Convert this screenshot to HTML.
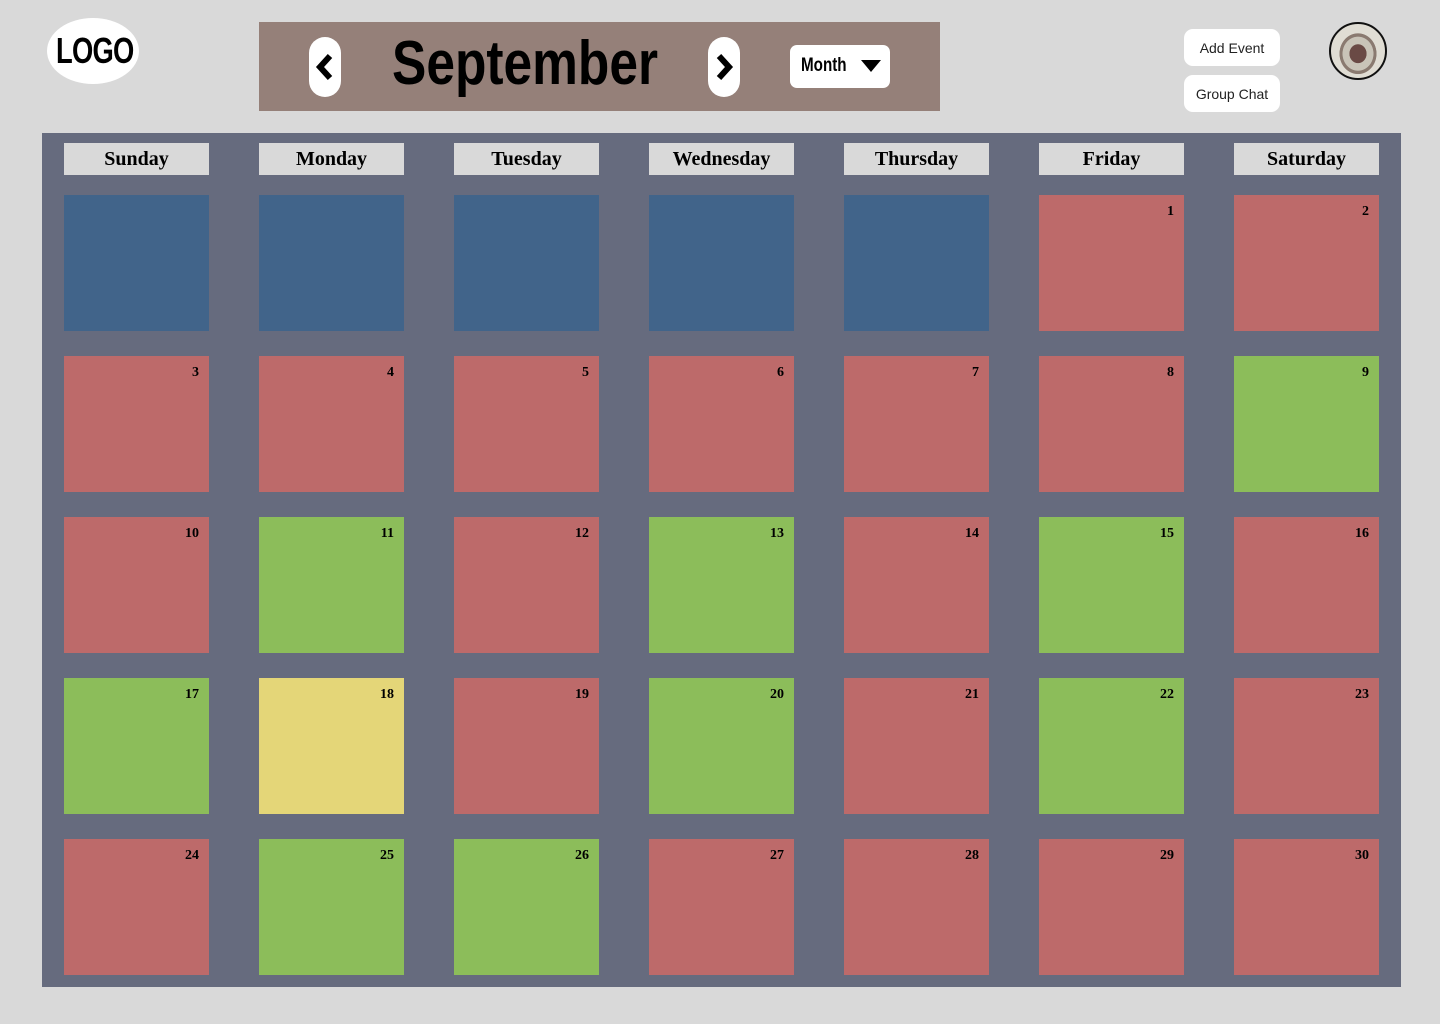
<!DOCTYPE html>
<html><head><style>
*{margin:0;padding:0;box-sizing:border-box}
body{width:1440px;height:1024px;background:#d9d9d9;position:relative;overflow:hidden;font-family:"Liberation Serif",serif}
.a{position:absolute}
.logo{left:47px;top:18px;width:92px;height:66px;background:#fff;border-radius:46px/33px}
.logot{left:56px;top:30px;font:bold 36px "Liberation Sans",sans-serif;transform:scaleX(.76);transform-origin:left top;letter-spacing:-1px}
.bar{left:259px;top:22px;width:681px;height:89px;background:#958079}
.arr{width:32px;height:60px;background:#fff;border-radius:16px;top:37px;display:flex;align-items:center;justify-content:center}
.title{left:392px;top:28px;font:bold 62px "Liberation Sans",sans-serif;transform:scaleX(.83);transform-origin:left top;white-space:nowrap}
.month{left:790px;top:45px;width:100px;height:43px;background:#fff;border-radius:7px}
.mt{left:801px;top:55px;font:bold 19px "Liberation Sans",sans-serif;transform:scaleX(.8);transform-origin:left top}
.btn{left:1184px;width:96px;height:37px;background:#fff;border-radius:9px;font:14px "Liberation Sans",sans-serif;display:flex;align-items:center;justify-content:center;color:#222}
.av{left:1329px;top:22px;width:58px;height:58px;border-radius:50%;border:2px solid #111;background:radial-gradient(ellipse at 50% 55%,#6a4a45 0 22%,#c9c4b8 23% 40%,#8a7a70 41% 48%,#e0ddd4 49%)}
.frame{left:42px;top:133px;width:1359px;height:854px;background:#666b7e}
.hd{height:32px;width:145px;background:#d9d9d9;top:143px;font-weight:bold;font-size:20px;display:flex;align-items:center;justify-content:center}
.c{width:145px;height:136px}
.c span{position:absolute;right:10px;top:9px;font:bold 14px "Liberation Serif",serif}
.B{background:#41648a}.R{background:#bd6a6a}.G{background:#8cbd5a}.Y{background:#e4d678}
</style></head><body>
<div class="a logo"></div>
<div class="a logot">LOGO</div>
<div class="a bar"></div>
<div class="a arr" style="left:309px"><svg width="20" height="32" viewBox="0 0 20 32"><path d="M15 5 L5 16 L15 27" stroke="#000" stroke-width="6" fill="none"/></svg></div>
<div class="a title">September</div>
<div class="a arr" style="left:708px"><svg width="20" height="32" viewBox="0 0 20 32"><path d="M5 5 L15 16 L5 27" stroke="#000" stroke-width="6" fill="none"/></svg></div>
<div class="a month"></div>
<div class="a mt">Month</div>
<svg class="a" style="left:861px;top:59px" width="20" height="14" viewBox="0 0 20 14"><path d="M0 1 H20 L10 13Z" fill="#000"/></svg>
<div class="a btn" style="top:29px">Add Event</div>
<div class="a btn" style="top:75px">Group Chat</div>
<div class="a av"></div>
<div class="a frame"></div>
<div id="g"></div>
<script>
var days=["Sunday","Monday","Tuesday","Wednesday","Thursday","Friday","Saturday"];
var cols=["BBBBBRR","RRRRRRG","RGRGRGR","GYRGRGR","RGGRRRR"];
var h="";
for(var i=0;i<7;i++)h+='<div class="a hd" style="left:'+(64+195*i)+'px">'+days[i]+'</div>';
var n=1;
for(var r=0;r<5;r++)for(var i=0;i<7;i++){var k=cols[r][i];var t="";if(k!="B"){t="<span>"+n+"</span>";n++;}
h+='<div class="a c '+k+'" style="left:'+(64+195*i)+'px;top:'+(195+161*r)+'px">'+t+'</div>';}
document.getElementById("g").innerHTML=h;
</script>
</body></html>
